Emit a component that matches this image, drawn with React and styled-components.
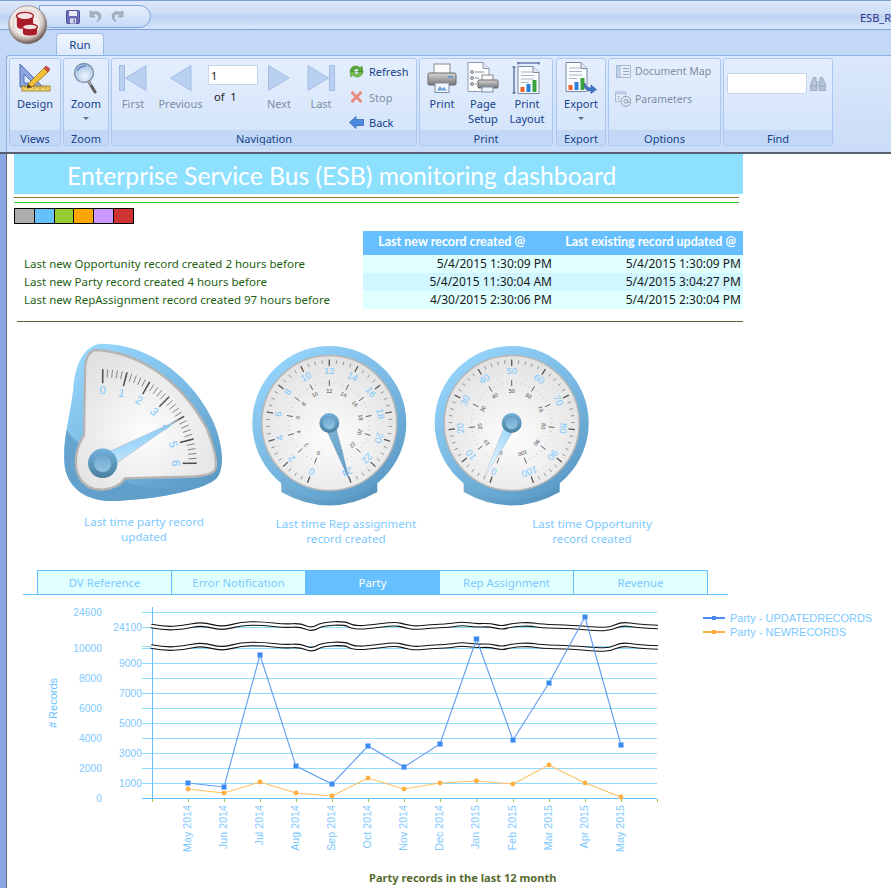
import React from "react";
import styled, { createGlobalStyle } from "styled-components";

const UI_FONT = `"Noto Sans", "Open Sans", sans-serif`;
const NAVY = "#15428b";
const SKY = "#66bfff";
const SKY_TEXT = "#7cc8ff";

const GlobalStyle = createGlobalStyle`
  html, body { margin: 0; padding: 0; background: #fff; }
  body { font-family: ${UI_FONT}; }
`;

/* ---------- ribbon icons ---------- */

const Cylinder = ({ cx, top, rx, ry, height }) => (
  <g>
    <path
      d={`M${cx - rx} ${top} v${height} q0 ${ry} ${rx} ${ry} q${rx} 0 ${rx} ${-ry} v${-height} z`}
      fill="#a81c28"
      stroke="#f6e8e8"
      strokeWidth="0.8"
    />
    <ellipse cx={cx} cy={top} rx={rx} ry={ry} fill="#f6e2e2" stroke="#a81c28" strokeWidth="1.4" />
  </g>
);

const LogoMark = () => (
  <svg width="40" height="40" viewBox="0 0 40 40">
    <defs>
      <radialGradient id="logoRim" cx="45%" cy="40%" r="58%">
        <stop offset="0%" stopColor="#fbf6f4" />
        <stop offset="68%" stopColor="#ede7e4" />
        <stop offset="84%" stopColor="#b4a8a4" />
        <stop offset="100%" stopColor="#73605c" />
      </radialGradient>
    </defs>
    <circle cx="19.7" cy="19.7" r="19" fill="url(#logoRim)" stroke="#7d6f6c" strokeWidth="0.6" />
    <circle cx="19" cy="19" r="14" fill="none" stroke="#c9b8b6" strokeWidth="0.6" />
    <Cylinder cx={17} top={11} rx={8.5} ry={3.6} height={10} />
    <Cylinder cx={22} top={22} rx={7.5} ry={3} height={6} />
  </svg>
);

const SaveIcon = () => (
  <svg width="14" height="14" viewBox="0 0 14 14">
    <rect x="0.5" y="0.5" width="13" height="13" rx="1" fill="#6a6cb8" stroke="#50529a" />
    <rect x="3" y="1" width="8" height="5" fill="#e8eaf8" />
    <rect x="4" y="8.5" width="6" height="5" fill="#d8daf0" />
    <rect x="7.5" y="9.5" width="1.5" height="3" fill="#6a6cb8" />
  </svg>
);

const UndoIcon = ({ $flip }) => (
  <svg width="13" height="13" viewBox="0 0 13 13" style={$flip ? { transform: "scaleX(-1)" } : undefined}>
    <path d="M1 1 L1 7 L6 7 L4 5 Q7 3 9 5 Q11 8 8 12 Q13 9 12 5 Q10 0 4 2 Z" fill="#a7b3c2" stroke="#8d9aab" strokeWidth="0.6" />
  </svg>
);

const DesignIcon = () => (
  <svg width="32" height="30" viewBox="0 0 32 30">
    <path d="M1 1 L1 24 L24 24 Z M5 11 L5 20 L14 20 Z" fillRule="evenodd" fill="#8ea6dc" stroke="#4f6fb8" />
    <rect x="3" y="23" width="28" height="5" fill="#f3d064" stroke="#8f7524" strokeWidth="0.8" />
    <path d="M6 23v2M9 23v3M12 23v2M15 23v3M18 23v2M21 23v3M24 23v2M27 23v3" stroke="#7a6420" strokeWidth="0.7" />
    <path d="M9 21 L25 5 L29 9 L13 24 L8 25 Z" fill="#f2bf3a" stroke="#9c6f16" strokeWidth="0.8" />
    <path d="M25 5 L27 3 L31 6 L29 9 Z" fill="#d04d3f" stroke="#8f2f26" strokeWidth="0.6" />
    <path d="M8 25 L9 21 L13 24 Z" fill="#4a3c28" />
  </svg>
);

const ZoomIcon = () => (
  <svg width="26" height="32" viewBox="0 0 26 32">
    <defs>
      <radialGradient id="lens" cx="55%" cy="65%" r="70%">
        <stop offset="0%" stopColor="#eef6fe" />
        <stop offset="100%" stopColor="#9cb8dc" />
      </radialGradient>
    </defs>
    <circle cx="11" cy="11" r="9.5" fill="url(#lens)" stroke="#7f93ad" strokeWidth="1.3" />
    <path d="M4 9 Q7 4 13 4" fill="none" stroke="#5d89c8" strokeWidth="1.4" />
    <path d="M16 20 L22 30" stroke="#5d5d5d" strokeWidth="3" strokeLinecap="round" />
    <path d="M15.5 19 L18 23" stroke="#a8a8a8" strokeWidth="2" />
  </svg>
);

const TRI = { fill: "#b9d0f0", stroke: "#a2bee6" };
const FirstIcon = () => (
  <svg width="28" height="26" viewBox="0 0 28 26">
    <rect x="0.5" y="0.5" width="5" height="25" {...TRI} />
    <path d="M6.5 13 L27 0.5 L27 25.5 Z" {...TRI} />
  </svg>
);
const PrevIcon = () => (
  <svg width="22" height="26" viewBox="0 0 22 26"><path d="M0.5 13 L21 0.5 L21 25.5 Z" {...TRI} /></svg>
);
const NextIcon = () => (
  <svg width="22" height="26" viewBox="0 0 22 26"><path d="M21 13 L0.5 0.5 L0.5 25.5 Z" {...TRI} /></svg>
);
const LastIcon = () => (
  <svg width="28" height="26" viewBox="0 0 28 26">
    <rect x="22.5" y="0.5" width="5" height="25" {...TRI} />
    <path d="M21.5 13 L1 0.5 L1 25.5 Z" {...TRI} />
  </svg>
);

const RefreshIcon = () => (
  <svg width="15" height="13" viewBox="0 0 15 13">
    <path d="M1 6 Q2 1 7 1 Q10 1 11 3 L13 1 L14 7 L8 7 L10 5 Q8 3 6 4 Q4.5 5 4.5 7 Z" fill="#58a838" stroke="#3d7d26" strokeWidth="0.5" />
    <path d="M14 7 Q13 12 8 12 Q5 12 4 10 L2 12 L1 6.5 L7 6.5 L5 8.5 Q7 10 9 9 Q10.5 8 10.5 7 Z" fill="#76c04e" stroke="#3d7d26" strokeWidth="0.5" />
  </svg>
);
const StopIcon = () => (
  <svg width="13" height="12" viewBox="0 0 13 12">
    <path d="M1.5 1 L11.5 11 M11.5 1 L1.5 11" stroke="#ec8a80" strokeWidth="2.8" />
  </svg>
);
const BackIcon = () => (
  <svg width="15" height="13" viewBox="0 0 15 13">
    <path d="M0.5 6.5 L7 0.5 L7 3.5 L14.5 3.5 L14.5 9.5 L7 9.5 L7 12.5 Z" fill="#4b8adf" stroke="#2d5fa8" strokeWidth="0.7" />
  </svg>
);

const PrintIcon = () => (
  <svg width="30" height="30" viewBox="0 0 30 30">
    <defs>
      <linearGradient id="printerBody" x1="0" y1="0" x2="0" y2="1">
        <stop offset="0%" stopColor="#d6d6d6" />
        <stop offset="100%" stopColor="#767676" />
      </linearGradient>
    </defs>
    <rect x="7" y="1" width="16" height="10" fill="#fbfbfb" stroke="#8a8a8a" />
    <rect x="1" y="10" width="28" height="12" rx="1.5" fill="url(#printerBody)" stroke="#6a6a6a" />
    <rect x="21" y="13" width="5" height="1.5" fill="#5b8fd0" />
    <rect x="8" y="20" width="14" height="9.5" fill="#f4f8fd" stroke="#7d8ea8" />
    <path d="M10 27.5 L13 23 L15 26 L17 24 L20 27.5 Z" fill="#6e9fd8" />
  </svg>
);

const PageSetupIcon = () => (
  <svg width="32" height="32" viewBox="0 0 32 32">
    <path d="M1 0.5 L16 0.5 L22 6.5 L22 29.5 L1 29.5 Z" fill="#fcfcfc" stroke="#8f9bb0" />
    <path d="M16 0.5 L16 6.5 L22 6.5" fill="#dfe6f0" stroke="#8f9bb0" />
    <circle cx="5" cy="10" r="1.4" fill="none" stroke="#5e6b80" />
    <circle cx="5" cy="16" r="1.4" fill="none" stroke="#5e6b80" />
    <circle cx="5" cy="22" r="1.4" fill="none" stroke="#5e6b80" />
    <path d="M8 10 H17 M8 16 H12 M8 22 H10" stroke="#7f8ea3" />
    <rect x="15" y="13" width="11" height="6" fill="#fafafa" stroke="#8a8a8a" />
    <rect x="11" y="18" width="20" height="8" rx="1" fill="url(#printerBody)" stroke="#6a6a6a" />
    <rect x="15" y="25" width="11" height="5" fill="#f0f5fb" stroke="#7d8ea8" />
  </svg>
);

const ChartBars = ({ x, y }) => (
  <g transform={`translate(${x} ${y})`}>
    <rect x="0" y="5" width="4" height="5" fill="#f0602a" />
    <rect x="6" y="2" width="4" height="8" fill="#2c7fd8" />
    <rect x="12" y="-2" width="4" height="12" fill="#35a33b" />
  </g>
);

const DocLines = ({ x, y }) => (
  <path d={`M${x} ${y} h13 M${x} ${y + 3.5} h13 M${x} ${y + 7} h13 M${x} ${y + 10.5} h8`} stroke="#a9b4c6" strokeWidth="1" />
);

const PrintLayoutIcon = () => (
  <svg width="30" height="32" viewBox="0 0 30 32">
    <path d="M6 1 H27 M6 -0.5 V2.5 M27 -0.5 V2.5" stroke="#2b3e7c" strokeWidth="1" />
    <path d="M0.5 5 H3.5 M2 5 V31 M0.5 31 H3.5" stroke="#2b3e7c" strokeWidth="1" fill="none" />
    <path d="M6 4.5 L21 4.5 L27 10.5 L27 31.5 L6 31.5 Z" fill="#fbfcfe" stroke="#7b8aa3" />
    <path d="M21 4.5 L21 10.5 L27 10.5" fill="#dfe6f0" stroke="#7b8aa3" />
    <DocLines x={9} y={10} />
    <ChartBars x={8.5} y={20} />
  </svg>
);

const ExportIcon = () => (
  <svg width="32" height="32" viewBox="0 0 32 32">
    <path d="M1 0.5 L16 0.5 L22 6.5 L22 29.5 L1 29.5 Z" fill="#fbfcfe" stroke="#7b8aa3" />
    <path d="M16 0.5 L16 6.5 L22 6.5" fill="#dfe6f0" stroke="#7b8aa3" />
    <DocLines x={4} y={6} />
    <ChartBars x={3.5} y={18} />
    <path d="M20 21 Q21 26 26 26 L26 23 L31.5 27.5 L26 31.5 L26 29 Q20 29 19 23 Z" fill="#3f74c8" stroke="#2b528f" strokeWidth="0.6" />
  </svg>
);

const DocMapIcon = () => (
  <svg width="15" height="13" viewBox="0 0 15 13">
    <rect x="0.5" y="0.5" width="14" height="12" fill="#e6eefa" stroke="#a7b8d0" />
    <rect x="1" y="1" width="4" height="11" fill="#bfd0ea" />
    <path d="M7 3.5 H13 M7 6.5 H13 M7 9.5 H13" stroke="#94a6c0" />
  </svg>
);

const ParametersIcon = () => (
  <svg width="17" height="16" viewBox="0 0 17 16">
    <rect x="0.5" y="0.5" width="11" height="10" fill="#e6eefa" stroke="#a7b8d0" />
    <rect x="1" y="1" width="10" height="2" fill="#b6c8e4" />
    <path d="M2.5 5.5 H5 M2.5 8 H5" stroke="#94a6c0" />
    <circle cx="11.5" cy="10.5" r="5.2" fill="#dfe9f8" stroke="#8c98a8" />
    <circle cx="11.5" cy="10.5" r="2" fill="none" stroke="#8c98a8" />
    <path d="M13.5 8.5 V11.5 Q15 12.5 15.5 10.5" fill="none" stroke="#8c98a8" strokeWidth="0.8" />
  </svg>
);

const BinocularsIcon = () => (
  <svg width="16" height="14" viewBox="0 0 16 14">
    <path d="M3.5 0.5 h2.5 v4 h1 v9 h-6.5 v-6 z M12.5 0.5 h-2.5 v4 h-1 v9 h6.5 v-6 z" fill="#b5c3d6" stroke="#8b9bb2" strokeWidth="0.7" />
    <path d="M1 9 h5.5 M9.5 9 h5.5" stroke="#8b9bb2" strokeWidth="0.7" />
    <rect x="6.5" y="5" width="3" height="3" fill="#c5d0e0" stroke="#8b9bb2" strokeWidth="0.5" />
  </svg>
);

/* ---------- ribbon layout ---------- */

const Frame = styled.div`
  position: relative;
  width: 891px;
  height: 888px;
  overflow: hidden;
  background: #c3d8f6;
  font-family: ${UI_FONT};
`;

const TitleBar = styled.div`
  display: flex;
  justify-content: space-between;
  height: 28px;
  box-sizing: content-box;
  border-top: 1px solid #7c9fd8;
  border-bottom: 1px solid #7c9fd8;
  background: linear-gradient(#dde8fa 0%, #cfdff7 40%, #bdd3f4 55%, #d9e6fb 100%);
`;

const QuickAccess = styled.div`
  display: flex;
  align-items: center;
  gap: 9px;
  box-sizing: border-box;
  width: 112px;
  height: 23px;
  margin: 4px 0 0 39px;
  padding-left: 26px;
  border: 1px solid #7ea2dc;
  border-radius: 0 12px 12px 12px;
  background: linear-gradient(#e6effc, #c6daf7);
`;

const Caption = styled.div`
  width: 31px;
  margin-top: 10px;
  overflow: hidden;
  font-size: 11px;
  line-height: 14px;
  white-space: nowrap;
  color: #2c2f86;
`;

const AppLogo = styled.div`
  position: absolute;
  left: 8px;
  top: 5px;
  width: 40px;
  height: 40px;
`;

const TabStrip = styled.div`
  display: flex;
  align-items: flex-end;
  height: 25px;
  padding-left: 56px;
  background: #c3d8f6;
`;

const RibbonTab = styled.div`
  width: 48px;
  height: 22px;
  box-sizing: border-box;
  border: 1px solid #9dbce8;
  border-bottom: 0;
  border-radius: 4px 4px 0 0;
  background: linear-gradient(#f1f6fe, #dde9fb);
  color: ${NAVY};
  font-size: 11.5px;
  line-height: 22px;
  text-align: center;
`;

const Ribbon = styled.div`
  display: flex;
  gap: 2px;
  box-sizing: border-box;
  height: 97px;
  margin-left: 6px;
  padding: 2px 0 0 2px;
  border-top: 1px solid #8db0e3;
  border-left: 1px solid #8db0e3;
  border-radius: 3px 0 0 0;
  background: linear-gradient(#dbe8fb, #cadcf7);
`;

const Group = styled.section`
  display: flex;
  flex-direction: column;
  box-sizing: border-box;
  width: ${(p) => p.$width}px;
  height: 88px;
  margin-right: ${(p) => p.$gap || 0}px;
  overflow: hidden;
  border: 1px solid #a9c7f0;
  border-radius: 3px;
  background: linear-gradient(#e4eefd, #d3e3fa);
`;

const GroupBody = styled.div`
  flex: 1;
  display: flex;
  min-height: 0;
  padding-left: ${(p) => p.$pad || 0}px;
`;

const GroupLabel = styled.div`
  height: 15px;
  background: #c2d8f6;
  color: ${NAVY};
  font-size: 11px;
  line-height: 17px;
  text-align: center;
`;

const BigButton = styled.div`
  display: flex;
  flex-direction: column;
  align-items: center;
  flex: none;
  width: ${(p) => p.$width}px;
  padding-top: 3px;
  color: ${(p) => (p.$disabled ? "#7f8ea3" : NAVY)};
  font-size: 11px;
  line-height: 15px;
  text-align: center;
`;

const IconSlot = styled.div`
  display: flex;
  align-items: center;
  justify-content: center;
  height: 32px;
  margin-bottom: 2px;
`;

const Chevron = styled.div`
  width: 0;
  height: 0;
  margin-top: 6px;
  border: 3px solid transparent;
  border-top: 3px solid #5b6f90;
  border-bottom: 0;
`;

const PageBox = styled.div`
  flex: none;
  width: 50px;
  padding-top: 6px;
  color: #222;
  font-size: 11px;
`;

const PageInput = styled.div`
  box-sizing: border-box;
  height: 20px;
  padding-left: 2px;
  border: 1px solid #c5d5ea;
  background: #fff;
  line-height: 19px;
`;

const PageOf = styled.div`
  margin-top: 4px;
  padding-left: 6px;
  word-spacing: 3px;
  line-height: 15px;
`;

const SmallColumn = styled.div`
  display: flex;
  flex-direction: column;
  gap: ${(p) => p.$gap ?? 0}px;
  padding-left: ${(p) => p.$left ?? 0}px;
`;

const SmallButton = styled.div`
  display: flex;
  flex: none;
  align-items: center;
  gap: ${(p) => p.$gap ?? 5}px;
  height: ${(p) => p.$height ?? 25.5}px;
  color: ${(p) => (p.$disabled ? "#7f8ea3" : NAVY)};
  font-size: ${(p) => p.$size ?? 11}px;
`;

const IconBox = styled.span`
  display: flex;
  justify-content: center;
  width: ${(p) => p.$width}px;
`;

const FindRow = styled.div`
  display: flex;
  align-items: center;
  gap: 3px;
  padding: 14px 0 0 3px;
  height: 21px;
`;

const FindInput = styled.div`
  box-sizing: border-box;
  width: 80px;
  height: 21px;
  border: 1px solid #c5d5ea;
  border-radius: 2px;
  background: #fff;
`;

/* ---------- report ---------- */

const Viewer = styled.main`
  box-sizing: border-box;
  height: 736px;
  padding-left: 7px;
  border-top: 2px solid #56606e;
  background: #fff;
  position: relative;

  &::before {
    content: "";
    position: absolute;
    left: 0;
    top: 0;
    bottom: 0;
    width: 6px;
    background: #8aa8e2;
    border-right: 1px solid #5e6672;
  }
`;

const Report = styled.div`
  padding-left: 7px;
`;

const Banner = styled.h1`
  box-sizing: border-box;
  width: 729px;
  height: 40px;
  margin: 0;
  padding-left: 53px;
  background: #8ee0ff;
  color: #fff;
  font-family: Lato, "Open Sans", sans-serif;
  font-size: 24.7px;
  font-weight: 400;
  line-height: 43px;
  white-space: nowrap;
`;

const Rule = styled.div`
  width: ${(p) => p.$width}px;
  height: 1px;
  margin: ${(p) => p.$top}px 0 0 ${(p) => p.$left || 0}px;
  background: ${(p) => p.$color};
`;

const Swatches = styled.div`
  display: flex;
  box-sizing: border-box;
  width: 120px;
  margin-top: 5px;
  border: 1px solid #000;
  border-right: 0;
`;

const Swatch = styled.div`
  flex: 1;
  box-sizing: border-box;
  height: 14px;
  border-right: 1px solid #000;
  background: ${(p) => p.$color};
`;

const InfoRow = styled.div`
  display: flex;
  align-items: flex-start;
  width: 729px;
  margin-top: 7px;
`;

const StatusList = styled.ul`
  flex: none;
  width: 349px;
  margin: 0;
  padding: 24px 0 0 10px;
  box-sizing: border-box;
  list-style: none;
  color: #1d5f12;
  font-size: 11.5px;
  line-height: 18px;
`;

const InfoTable = styled.table`
  width: 380px;
  border-collapse: collapse;
  border-spacing: 0;
  table-layout: fixed;
`;

const HeadCell = styled.th`
  box-sizing: border-box;
  height: 24px;
  padding: 0 ${(p) => p.$right}px 4px 0;
  background: ${SKY};
  color: #fff;
  font-family: Lato, "Open Sans", sans-serif;
  font-size: 12.5px;
  font-weight: 700;
  text-align: right;
  white-space: nowrap;
`;

const DataRow = styled.tr`
  background: ${(p) => (p.$alt ? "#d0f7ff" : "#e0ffff")};
`;

const DataCell = styled.td`
  box-sizing: border-box;
  height: 18px;
  padding: 0 ${(p) => p.$right}px 0 0;
  color: #1a1a1a;
  font-size: 12px;
  line-height: 18px;
  text-align: right;
  white-space: nowrap;
`;

const GaugeRow = styled.div`
  display: flex;
  align-items: flex-start;
  margin-top: 20px;
  padding-left: 50px;
`;

const GaugeSlot = styled.div`
  flex: none;
  width: 160px;
  height: 168px;
  margin-left: ${(p) => p.$offset || 0}px;
`;

const CaptionRow = styled.div`
  display: flex;
  align-items: flex-start;
  margin-top: 4px;
  padding-left: 50px;
`;

const GaugeCaption = styled.div`
  flex: none;
  width: 160px;
  margin: ${(p) => p.$top || 0}px 0 0 ${(p) => p.$offset || 0}px;
  color: ${SKY_TEXT};
  font-size: 11.6px;
  line-height: 15px;
  text-align: center;
`;

const TabBar = styled.nav`
  display: flex;
  box-sizing: border-box;
  width: 705px;
  margin: 24px 0 0 9px;
  padding-left: 14px;
  border-bottom: 1px solid ${SKY};
`;

const ReportTab = styled.div`
  flex: none;
  box-sizing: border-box;
  width: ${(p) => (p.$last ? 135 : 134)}px;
  height: 24px;
  border: 1px solid ${SKY};
  border-width: 1px ${(p) => (p.$last ? 1 : 0)}px 0 1px;
  background: ${(p) => (p.$active ? SKY : "#e0ffff")};
  color: ${(p) => (p.$active ? "#fff" : SKY_TEXT)};
  font-size: 11.4px;
  line-height: 24px;
  text-align: center;
`;

const ChartRow = styled.div`
  display: flex;
  align-items: flex-start;
  margin-top: 2px;
`;

const ChartSvg = styled.svg`
  flex: none;
  display: block;
`;

const Legend = styled.ul`
  margin: 14px 0 0;
  padding: 0;
  list-style: none;
  color: ${SKY_TEXT};
  font-family: "Liberation Sans", Arial, sans-serif;
  font-size: 11px;
  line-height: 14px;
`;

const LegendItem = styled.li`
  display: flex;
  align-items: center;
  gap: 5px;
  white-space: nowrap;
`;

const LegendLine = styled.span`
  position: relative;
  width: 22px;
  height: 2px;
  background: ${(p) => p.$color};

  &::after {
    content: "";
    position: absolute;
    left: 9px;
    top: -1px;
    width: 4px;
    height: 4px;
    background: ${(p) => p.$color};
  }
`;

const ChartTitle = styled.div`
  padding: 8px 0 0 355px;
  color: #566b2f;
  font-size: 11.1px;
  font-weight: 700;
  line-height: 16px;
  white-space: nowrap;
`;

/* ---------- gauges ---------- */

const polar = (cx, cy, r, deg) => {
  const a = ((deg - 90) * Math.PI) / 180;
  return [cx + r * Math.cos(a), cy + r * Math.sin(a)];
};

const Ticks = ({ cx, cy, from, to, count, outer, inner, color, width }) => (
  <g stroke={color} strokeWidth={width}>
    {Array.from({ length: count + 1 }, (_, i) => {
      const deg = from + ((to - from) * i) / count;
      const [x1, y1] = polar(cx, cy, outer, deg);
      const [x2, y2] = polar(cx, cy, inner, deg);
      return <line key={i} x1={x1} y1={y1} x2={x2} y2={y2} />;
    })}
  </g>
);

const ScaleLabels = ({ cx, cy, labels, from, to, r, size, color }) => (
  <g fill={color} fontFamily="Liberation Sans, Arial, sans-serif" fontSize={size} textAnchor="middle">
    {labels.map((label, i) => {
      const deg = from + ((to - from) * i) / (labels.length - 1);
      const [x, y] = polar(cx, cy, r, deg);
      return (
        <text key={label} x={x} y={y + size * 0.36} transform={`rotate(${deg} ${x} ${y})`}>
          {label}
        </text>
      );
    })}
  </g>
);

const Needle = ({ cx, cy, tip, half, fill, edge }) => {
  const dx = tip[0] - cx;
  const dy = tip[1] - cy;
  const len = Math.hypot(dx, dy);
  const nx = (-dy / len) * half;
  const ny = (dx / len) * half;
  return (
    <polygon
      points={`${cx + nx},${cy + ny} ${tip[0]},${tip[1]} ${cx - nx},${cy - ny}`}
      fill={fill}
      stroke={edge}
      strokeWidth="0.6"
    />
  );
};

const Pivot = ({ cx, cy, r, inner }) => (
  <g>
    <circle cx={cx} cy={cy} r={r} fill="url(#pivotRing)" />
    <circle cx={cx} cy={cy} r={inner} fill="url(#pivotCap)" stroke="#5f93b5" strokeWidth="0.6" />
  </g>
);

const GaugeDefs = () => (
  <svg width="0" height="0" style={{ position: "absolute" }}>
    <defs>
      <linearGradient id="bezel" x1="0.15" y1="0" x2="0.85" y2="1">
        <stop offset="0%" stopColor="#98d8ff" />
        <stop offset="50%" stopColor="#79b9e2" />
        <stop offset="100%" stopColor="#5897c2" />
      </linearGradient>
      <linearGradient id="foot" x1="0" y1="0" x2="1" y2="0.5">
        <stop offset="0%" stopColor="#78b2d8" />
        <stop offset="100%" stopColor="#5794bf" />
      </linearGradient>
      <radialGradient id="face" cx="50%" cy="60%" r="60%">
        <stop offset="0%" stopColor="#fdfdfd" />
        <stop offset="100%" stopColor="#e2e2e2" />
      </radialGradient>
      <linearGradient id="pivotRing" x1="0" y1="0" x2="0" y2="1">
        <stop offset="0%" stopColor="#74b2dc" />
        <stop offset="100%" stopColor="#4a7f9f" />
      </linearGradient>
      <linearGradient id="pivotCap" x1="0" y1="0" x2="0" y2="1">
        <stop offset="0%" stopColor="#6ba7ce" />
        <stop offset="100%" stopColor="#94c4e2" />
      </linearGradient>
      <linearGradient id="needleSteel" x1="0" y1="0" x2="0" y2="1">
        <stop offset="0%" stopColor="#7fb4d8" />
        <stop offset="100%" stopColor="#5f9ac4" />
      </linearGradient>
      <linearGradient id="needleBright" x1="0.4" y1="0" x2="0.6" y2="1">
        <stop offset="0%" stopColor="#7cc4f5" />
        <stop offset="55%" stopColor="#a9dafb" />
        <stop offset="100%" stopColor="#d6effe" />
      </linearGradient>
      <linearGradient id="needleSweep" x1="0" y1="1" x2="1" y2="0">
        <stop offset="0%" stopColor="#f4fbff" />
        <stop offset="100%" stopColor="#8ed0fb" />
      </linearGradient>
    </defs>
  </svg>
);

const SweepGauge = () => {
  const cx = 38.7;
  const cy = 121.3;
  const scale = [0, 1, 2, 3, 4, 5, 6];
  return (
    <svg width="160" height="168" viewBox="0 0 160 168">
      <g transform="translate(-14 -7) scale(0.3333)">
        <path
          d="M150 26 C300 25 430 130 490 260 C520 330 525 400 500 430 C470 460 350 490 200 498 C120 502 60 470 45 400 C35 320 60 250 70 160 C75 90 100 35 150 26 Z"
          fill="url(#bezel)"
        />
        <path
          d="M50 284 C62 305 80 322 100 330 L90 430 C110 480 200 470 225 440 C300 470 420 470 500 430 C470 460 350 490 200 498 C120 502 60 470 45 400 C40 360 43 320 50 284 Z"
          fill="#5f9cc8"
          opacity="0.8"
        />
        <path
          d="M135 45 C260 50 390 130 470 280 C490 330 505 380 495 405 C480 430 400 425 300 428 L225 430 C200 470 120 480 90 430 C65 390 80 335 102 300 L105 110 C105 75 115 50 135 45 Z"
          fill="url(#face)"
          stroke="#b4b4b4"
          strokeWidth="7"
        />
      </g>
      <Ticks cx={cx} cy={cy} from={0} to={90} count={30} outer={94} inner={86} color="#777" width="0.9" />
      <Ticks cx={cx} cy={cy} from={0} to={90} count={6} outer={94} inner={80} color="#4e4e4e" width="1.5" />
      <ScaleLabels cx={cx} cy={cy} labels={scale} from={0} to={90} r={73} size={11.5} color={SKY_TEXT} />
      <Needle cx={cx} cy={cy} tip={[cx + 75.7, cy - 43.4]} half={8} fill="url(#needleBright)" edge="#b0bac4" />
      <Pivot cx={cx} cy={cy} r={14.7} inner={9} />
    </svg>
  );
};

const RoundGauge = ({ cx, cy, labels, minors, tip, needle }) => {
  const count = labels.length - 1;
  return (
    <svg width="160" height="168" viewBox="0 0 160 168">
      <path
        d={`M${cx - 48} ${cy + 52} L${cx - 48} ${cy + 69} Q${cx} ${cy + 96} ${cx + 48} ${cy + 69} L${cx + 48} ${cy + 52} Z`}
        fill="url(#foot)"
      />
      <circle cx={cx} cy={cy} r={77} fill="url(#bezel)" />
      <circle cx={cx} cy={cy} r={67.5} fill="url(#face)" stroke="#b6b6b6" strokeWidth="1.5" />
      <Ticks cx={cx} cy={cy} from={-160} to={160} count={count * minors} outer={63} inner={59.5} color="#8a8a8a" width="0.9" />
      <Ticks cx={cx} cy={cy} from={-160} to={160} count={count} outer={63.5} inner={57} color="#555" width="1.2" />
      <Ticks cx={cx} cy={cy} from={-160} to={160} count={count * minors} outer={41} inner={39.5} color="#c0c0c0" width="0.8" />
      <Ticks cx={cx} cy={cy} from={-160} to={160} count={count} outer={43} inner={37} color="#666" width="1" />
      <ScaleLabels cx={cx} cy={cy} labels={labels} from={-160} to={160} r={52} size={9.5} color={SKY_TEXT} />
      <ScaleLabels cx={cx} cy={cy} labels={labels} from={-160} to={160} r={32} size={5.5} color="#444" />
      <Needle cx={cx} cy={cy} tip={tip} half={5.5} fill={needle} edge="rgba(130,150,170,0.5)" />
      <Pivot cx={cx} cy={cy} r={10} inner={6.5} />
    </svg>
  );
};

/* ---------- chart ---------- */

const MONTHS = [
  ["May 2014", 188, 783, 789],
  ["Jun 2014", 224, 787, 793],
  ["Jul 2014", 260, 655, 782],
  ["Aug 2014", 296, 766, 793],
  ["Sep 2014", 332, 784, 796],
  ["Oct 2014", 368, 746, 778],
  ["Nov 2014", 404, 767, 789],
  ["Dec 2014", 440, 744, 783],
  ["Jan 2015", 476.5, 639, 781],
  ["Feb 2015", 513, 740, 784],
  ["Mar 2015", 549, 683, 765],
  ["Apr 2015", 585, 617, 783],
  ["May 2015", 621, 745, 797],
];

const Y_AXIS = [
  ["24600", 612, 102],
  ["24100", 627, 142],
  ["", 646, 142],
  ["10000", 648, 102],
  ["9000", 663, 142],
  ["8000", 678, 102],
  ["7000", 693, 142],
  ["6000", 708, 102],
  ["5000", 723, 142],
  ["4000", 738, 102],
  ["3000", 753, 142],
  ["2000", 768, 102],
  ["1000", 783, 142],
];

const WAVE = [
  [151, 626], [164, 628.5], [183, 627.5], [202, 623.5], [222, 629], [241, 623.5], [262, 623.5],
  [285, 626], [300, 625], [312, 630], [322, 624], [345, 623], [352, 627], [365, 627.5],
  [395, 623.5], [405, 626], [415, 628], [430, 626.5], [450, 625.5], [462, 623.5], [475, 625.5],
  [490, 625], [502, 628], [512, 625], [530, 624], [540, 626], [573, 627], [597, 629],
  [610, 629], [622, 623.5], [637, 626], [658, 627],
];

const wavePath = (pts) => {
  let d = `M${pts[0][0]} ${pts[0][1]}`;
  for (let i = 1; i < pts.length - 1; i += 1) {
    const mx = (pts[i][0] + pts[i + 1][0]) / 2;
    const my = (pts[i][1] + pts[i + 1][1]) / 2;
    d += ` Q${pts[i][0]} ${pts[i][1]} ${mx} ${my}`;
  }
  const last = pts[pts.length - 1];
  return `${d} L${last[0]} ${last[1]}`;
};

const AxisBreak = ({ dy }) => (
  <g transform={`translate(0 ${dy})`} fill="none">
    <path d={wavePath(WAVE)} stroke="#111" strokeWidth="4.6" />
    <path d={wavePath(WAVE)} stroke="#fff" strokeWidth="2.3" />
  </g>
);

const RecordsChart = () => (
  <ChartSvg width="689" height="265" viewBox="14 597 689 265" fontFamily="Liberation Sans, Arial, sans-serif">
    {Y_AXIS.map(([, y]) => (
      <line key={y} x1="142" x2="657" y1={y + 0.5} y2={y + 0.5} stroke="#8fdcff" />
    ))}
    <line x1="152.5" x2="152.5" y1="607" y2="798" stroke={SKY} />
    <line x1="142" x2="657" y1="798.5" y2="798.5" stroke={SKY} />
    {Y_AXIS.map(([label, y, right]) => (
      <text key={y} x={right} y={y + 3.5} fontSize="10.2" letterSpacing="0.1" textAnchor="end" fill={SKY_TEXT}>
        {label}
      </text>
    ))}
    <text x="102" y="801.5" fontSize="10.2" textAnchor="end" fill={SKY_TEXT}>0</text>
    <text x="57" y="703" fontSize="11" textAnchor="middle" fill={SKY} transform="rotate(-90 57 703)"># Records</text>

    <AxisBreak dy={0} />
    <AxisBreak dy={20.5} />

    {[152, ...MONTHS.map((m) => m[1]), 657].map((x) => (
      <line key={x} x1={x + 0.5} x2={x + 0.5} y1="799" y2="802" stroke="#99cc33" />
    ))}
    {MONTHS.map(([label, x]) => (
      <text key={label} x={x + 2.5} y="805" fontSize="10.7" textAnchor="end" fill={SKY_TEXT} transform={`rotate(-90 ${x + 2.5} 805)`}>
        {label}
      </text>
    ))}

    <polyline points={MONTHS.map((m) => `${m[1]},${m[2]}`).join(" ")} fill="none" stroke="#609bf0" strokeWidth="1.1" />
    <polyline points={MONTHS.map((m) => `${m[1]},${m[3]}`).join(" ")} fill="none" stroke="#ffc060" strokeWidth="1.1" />
    {MONTHS.map(([label, x, blue, orange]) => (
      <g key={label}>
        <rect x={x - 2.7} y={blue - 2.7} width="5.4" height="5.4" fill="#3a8af0" stroke="#d0e4fc" strokeWidth="0.4" />
        <circle cx={x} cy={orange} r="2.4" fill="#ffb040" />
      </g>
    ))}
  </ChartSvg>
);

/* ---------- page ---------- */

const STATUS = [
  "Last new Opportunity record created 2 hours before",
  "Last new Party record created 4 hours before",
  "Last new RepAssignment record created 97 hours before",
];

const RECORDS = [
  ["5/4/2015 1:30:09 PM", "5/4/2015 1:30:09 PM"],
  ["5/4/2015 11:30:04 AM", "5/4/2015 3:04:27 PM"],
  ["4/30/2015 2:30:06 PM", "5/4/2015 2:30:04 PM"],
];

const SWATCHES = ["#aeaeae", SKY, "#99cc33", "#ffa500", "#cc99ff", "#cc3333"];
const TABS = ["DV Reference", "Error Notification", "Party", "Rep Assignment", "Revenue"];
const HOURS = [0, 2, 4, 6, 8, 10, 12, 14, 16, 18, 20, 22, 24];
const PERCENT = [0, 10, 20, 30, 40, 50, 60, 70, 80, 90, 100];

export default function App() {
  return (
    <Frame>
      <GlobalStyle />
      <GaugeDefs />
      <TitleBar>
        <QuickAccess>
          <SaveIcon />
          <UndoIcon />
          <UndoIcon $flip />
        </QuickAccess>
        <Caption>ESB_Report</Caption>
      </TitleBar>
      <AppLogo>
        <LogoMark />
      </AppLogo>
      <TabStrip>
        <RibbonTab>Run</RibbonTab>
      </TabStrip>

      <Ribbon>
        <Group $width={52}>
          <GroupBody>
            <BigButton $width={50}>
              <IconSlot><DesignIcon /></IconSlot>
              Design
            </BigButton>
          </GroupBody>
          <GroupLabel>Views</GroupLabel>
        </Group>

        <Group $width={46}>
          <GroupBody>
            <BigButton $width={44}>
              <IconSlot><ZoomIcon /></IconSlot>
              Zoom
              <Chevron />
            </BigButton>
          </GroupBody>
          <GroupLabel>Zoom</GroupLabel>
        </Group>

        <Group $width={306}>
          <GroupBody $pad={1}>
            <BigButton $width={40} $disabled>
              <IconSlot><FirstIcon /></IconSlot>
              First
            </BigButton>
            <BigButton $width={55} $disabled>
              <IconSlot><PrevIcon /></IconSlot>
              Previous
            </BigButton>
            <PageBox>
              <PageInput>1</PageInput>
              <PageOf>of 1</PageOf>
            </PageBox>
            <BigButton $width={42} $disabled>
              <IconSlot><NextIcon /></IconSlot>
              Next
            </BigButton>
            <BigButton $width={42} $disabled>
              <IconSlot><LastIcon /></IconSlot>
              Last
            </BigButton>
            <SmallColumn $left={7}>
              <SmallButton><IconBox $width={15}><RefreshIcon /></IconBox>Refresh</SmallButton>
              <SmallButton $disabled><IconBox $width={15}><StopIcon /></IconBox>Stop</SmallButton>
              <SmallButton><IconBox $width={15}><BackIcon /></IconBox>Back</SmallButton>
            </SmallColumn>
          </GroupBody>
          <GroupLabel>Navigation</GroupLabel>
        </Group>

        <Group $width={134} $gap={1}>
          <GroupBody>
            <BigButton $width={44}>
              <IconSlot><PrintIcon /></IconSlot>
              Print
            </BigButton>
            <BigButton $width={38}>
              <IconSlot><PageSetupIcon /></IconSlot>
              Page Setup
            </BigButton>
            <BigButton $width={50}>
              <IconSlot><PrintLayoutIcon /></IconSlot>
              Print Layout
            </BigButton>
          </GroupBody>
          <GroupLabel>Print</GroupLabel>
        </Group>

        <Group $width={50}>
          <GroupBody>
            <BigButton $width={48}>
              <IconSlot><ExportIcon /></IconSlot>
              Export
              <Chevron />
            </BigButton>
          </GroupBody>
          <GroupLabel>Export</GroupLabel>
        </Group>

        <Group $width={113}>
          <GroupBody $pad={6}>
            <SmallColumn $gap={4}>
              <SmallButton $disabled $gap={4} $height={24} $size={10.5}><IconBox $width={16}><DocMapIcon /></IconBox>Document Map</SmallButton>
              <SmallButton $disabled $gap={4} $height={24} $size={10.5}><IconBox $width={16}><ParametersIcon /></IconBox>Parameters</SmallButton>
            </SmallColumn>
          </GroupBody>
          <GroupLabel>Options</GroupLabel>
        </Group>

        <Group $width={110}>
          <GroupBody>
            <FindRow>
              <FindInput />
              <BinocularsIcon />
            </FindRow>
          </GroupBody>
          <GroupLabel>Find</GroupLabel>
        </Group>
      </Ribbon>

      <Viewer>
        <Report>
          <Banner>Enterprise Service Bus (ESB) monitoring dashboard</Banner>
          <Rule $width={725} $top={3} $color="#8a7a2a" />
          <Rule $width={725} $top={4} $color="#33cc33" />
          <Swatches>
            {SWATCHES.map((c) => (
              <Swatch key={c} $color={c} />
            ))}
          </Swatches>

          <InfoRow>
            <StatusList>
              {STATUS.map((line) => (
                <li key={line}>{line}</li>
              ))}
            </StatusList>
            <InfoTable>
              <thead>
                <tr>
                  <HeadCell $right={28}>Last new record created @</HeadCell>
                  <HeadCell $right={7}>Last existing record updated @</HeadCell>
                </tr>
              </thead>
              <tbody>
                {RECORDS.map(([created, updated], i) => (
                  <DataRow key={created} $alt={i === 1}>
                    <DataCell $right={1}>{created}</DataCell>
                    <DataCell $right={2}>{updated}</DataCell>
                  </DataRow>
                ))}
              </tbody>
            </InfoTable>
          </InfoRow>

          <Rule $width={726} $top={12} $left={3} $color="#566b2f" />

          <GaugeRow>
            <GaugeSlot><SweepGauge /></GaugeSlot>
            <GaugeSlot $offset={26}>
              <RoundGauge cx={79.3} cy={81} labels={HOURS} minors={4} tip={[100, 139.7]} needle="url(#needleSteel)" />
            </GaugeSlot>
            <GaugeSlot $offset={22}>
              <RoundGauge cx={79.7} cy={81} labels={PERCENT} minors={5} tip={[52, 135.7]} needle="url(#needleSweep)" />
            </GaugeSlot>
          </GaugeRow>
          <CaptionRow>
            <GaugeCaption>Last time party record<br />updated</GaugeCaption>
            <GaugeCaption $offset={42} $top={2}>Last time Rep assignment<br />record created</GaugeCaption>
            <GaugeCaption $offset={86} $top={2}>Last time Opportunity<br />record created</GaugeCaption>
          </CaptionRow>

          <TabBar>
            {TABS.map((tab, i) => (
              <ReportTab key={tab} $active={tab === "Party"} $last={i === TABS.length - 1}>
                {tab}
              </ReportTab>
            ))}
          </TabBar>

          <ChartRow>
            <RecordsChart />
            <Legend>
              <LegendItem><LegendLine $color="#4a8cf0" />Party - UPDATEDRECORDS</LegendItem>
              <LegendItem><LegendLine $color="#ffb040" />Party - NEWRECORDS</LegendItem>
            </Legend>
          </ChartRow>
          <ChartTitle>Party records in the last 12 month</ChartTitle>
        </Report>
      </Viewer>
    </Frame>
  );
}
